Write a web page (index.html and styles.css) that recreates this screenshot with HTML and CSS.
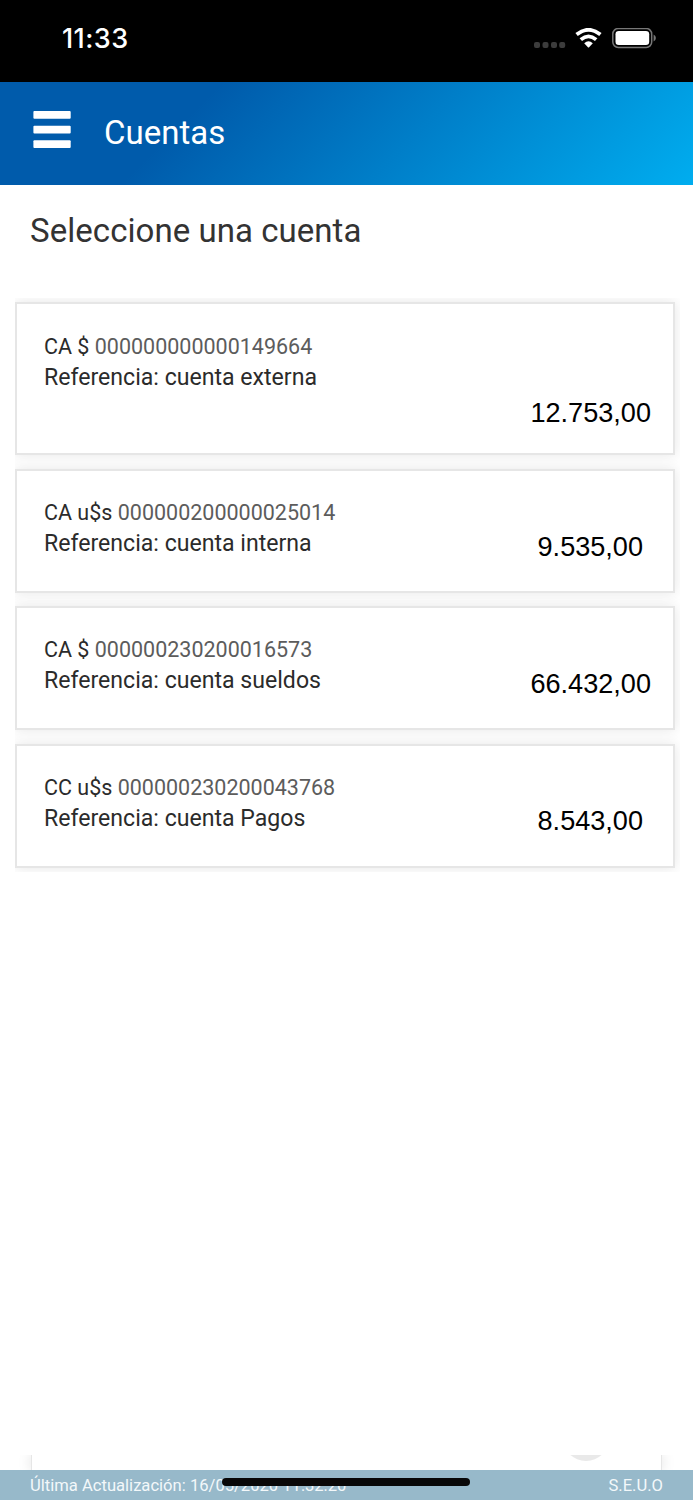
FILE: index.html
```html
<!DOCTYPE html>
<html lang="es">
<head>
<meta charset="UTF-8" />
<meta name="viewport" content="width=device-width, initial-scale=1.0" />
<title>Cuentas</title>
<link rel="stylesheet" href="styles.css">
</head>
<body>

<div class="pantalla">
  <div class="barra-estado">
    <span class="hora">11:33</span>
    <div class="iconos-estado">
      <svg class="senal" width="32" height="6" viewBox="0 0 32 6">
        <rect x="0" y="0" width="6" height="6" rx="2" />
        <rect x="8.5" y="0" width="6" height="6" rx="2" />
        <rect x="17" y="0" width="6" height="6" rx="2" />
        <rect x="25.2" y="0" width="6" height="6" rx="2" />
      </svg>
      <svg class="wifi" width="27" height="20" viewBox="0 0 27 20">
        <path d="M1.6 6.6 Q13.5 -3 25.4 6.6" fill="none" stroke="#fff" stroke-width="3.8" />
        <path d="M5.8 11.6 Q13.5 5.2 21.2 11.6" fill="none" stroke="#fff" stroke-width="3.8" />
        <path d="M9.2 15.3 Q13.5 11.4 17.8 15.3 L14.1 19.2 Q13.5 19.8 12.9 19.2 Z" fill="#fff" />
      </svg>
      <svg class="bateria" width="44" height="21" viewBox="0 0 44 21">
        <rect x="0.8" y="0.5" width="38.9" height="19" rx="5.5" fill="none" stroke="#777" stroke-width="1.5" />
        <rect x="3.5" y="2.9" width="33.7" height="14.2" rx="3.3" fill="#fff" />
        <path d="M41.6 6.5 Q43.9 7.7 43.9 10 Q43.9 12.3 41.6 13.5 Z" fill="#777" />
      </svg>
    </div>
  </div>

  <header class="encabezado">
    <svg class="menu" width="38" height="38" viewBox="0 0 38 38">
      <rect x="0.4" y="0" width="37.3" height="7.7" rx="1" />
      <rect x="0.4" y="14.7" width="37.3" height="7.7" rx="1" />
      <rect x="0.4" y="29.3" width="37.3" height="7.7" rx="1" />
    </svg>
    <h1>Cuentas</h1>
  </header>

  <h2 class="titulo">Seleccione una cuenta</h2>

  <div class="lista">
    <div class="cuenta externa">
      <div class="datos">
        <p class="numero">CA $ <span>000000000000149664</span></p>
        <p class="referencia">Referencia: cuenta externa</p>
      </div>
      <span class="saldo">12.753,00</span>
    </div>
    <div class="cuenta">
      <div class="datos">
        <p class="numero">CA u$s <span>000000200000025014</span></p>
        <p class="referencia">Referencia: cuenta interna</p>
      </div>
      <span class="saldo corto">9.535,00</span>
    </div>
    <div class="cuenta">
      <div class="datos">
        <p class="numero">CA $ <span>000000230200016573</span></p>
        <p class="referencia">Referencia: cuenta sueldos</p>
      </div>
      <span class="saldo">66.432,00</span>
    </div>
    <div class="cuenta ultima">
      <div class="datos">
        <p class="numero">CC u$s <span>000000230200043768</span></p>
        <p class="referencia">Referencia: cuenta Pagos</p>
      </div>
      <span class="saldo corto">8.543,00</span>
    </div>
  </div>

  <div class="panel-inferior">
    <svg width="46" height="7" viewBox="0 0 46 7"><circle cx="23" cy="-17" r="23" fill="#e9e9e9" /></svg>
  </div>

  <footer class="pie">
    <span class="actualizacion">Última Actualización: 16/05/2020 11:32:20</span>
    <span class="seuo">S.E.U.O</span>
    <div class="indicador"></div>
  </footer>
</div>

</body>
</html>
```
FILE: styles.css
```css
* { box-sizing: border-box; }
body { margin: 0; background: #fff; font-family: Roboto, sans-serif; color: #2b2b2b; }
h1, h2, p { margin: 0; font-weight: 400; }
svg { display: block; }
.pantalla { display: flex; flex-direction: column; height: 1500px; overflow: hidden; }

/* barra de estado */
.barra-estado { flex: none; height: 82px; background: #000; display: flex; justify-content: space-between; padding: 22px 37px 0 62px; }
.hora { font-family: Inter, sans-serif; font-weight: 500; font-size: 27px; line-height: 34px; letter-spacing: 0.4px; color: #fff; }
.iconos-estado { display: flex; padding-top: 6px; }
.senal { margin: 14px 9px 0 0; fill: #3c3c3c; }
.wifi { margin-right: 10px; }

/* cabecera */
.encabezado { flex: none; height: 103px; display: flex; padding: 29px 33px 0; background: linear-gradient(135deg, #005bab 0%, #005bab 28%, #00adef 100%); }
.menu { fill: #fff; margin-right: 33px; }
.encabezado h1 { font-size: 33px; line-height: 44px; color: #fff; }

.titulo { font-size: 33px; line-height: 40px; padding: 26px 30px 0; letter-spacing: 0.05px; color: #333; }

/* cuentas */
.lista { flex: none; margin: 47px 13px 0 15px; padding: 4.4px 5px 4px 0; overflow: hidden; display: flex; flex-direction: column; gap: 13.7px; }
.cuenta { height: 124px; padding: 26.2px 22px 0 27px; display: flex; justify-content: space-between; background: #fff; border: 2px solid #e6e6e6; box-shadow: 0 0 12px rgba(0,0,0,0.1); }
.externa { height: 152.5px; padding-top: 27px; }
.numero, .referencia { line-height: 31px; white-space: pre; }
.numero { font-size: 21.5px; }
.referencia { font-size: 23.1px; line-height: 32px; }
.numero span { color: #5c5c5c; }
.saldo { font-family: "Liberation Sans", Arial, sans-serif; font-size: 27.1px; line-height: 32px; color: #000; padding-top: 34px; }
.corto { padding-right: 8px; }
.externa .saldo { padding-top: 66px; }
.ultima .saldo { padding-top: 33px; }

/* panel que asoma por debajo */
.panel-inferior { flex: none; height: 15px; margin: auto 31px 0; padding-right: 52px; display: flex; justify-content: flex-end; border: solid #e6e6e6; border-width: 0 1px; box-shadow: 0 0 14px rgba(0,0,0,0.13); clip-path: inset(0 -12px 0 -12px); }

.pie { position: relative; flex: none; height: 30px; padding: 0 30px; display: flex; justify-content: space-between; background: #97b9ca; color: #f3f8fa; font-size: 16.6px; line-height: 31px; }
.indicador { position: absolute; left: 222px; top: 8px; width: 248px; height: 8px; border-radius: 4px; background: #080808; }
```
